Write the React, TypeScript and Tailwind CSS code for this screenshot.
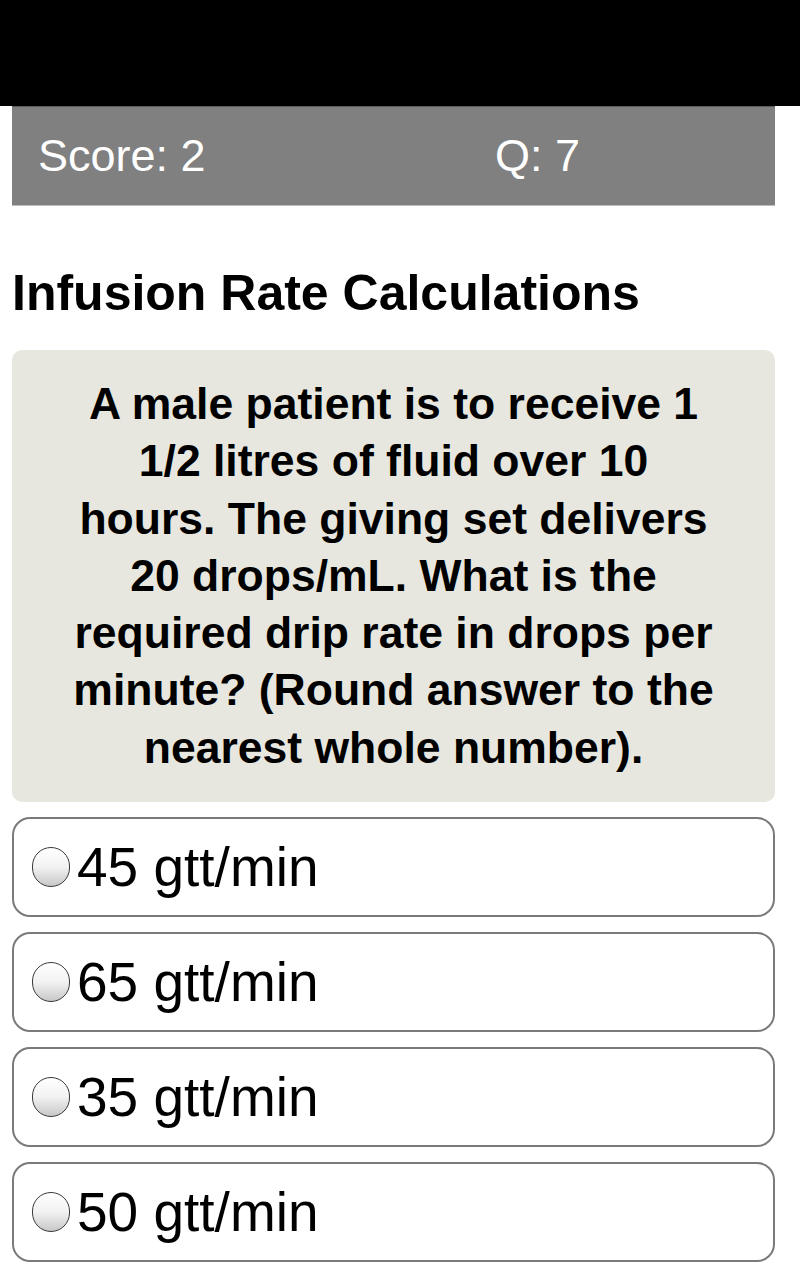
const options = ["45 gtt/min", "65 gtt/min", "35 gtt/min", "50 gtt/min"];

const questionLines = [
  "A male patient is to receive 1",
  "1/2 litres of fluid over 10",
  "hours. The giving set delivers",
  "20 drops/mL. What is the",
  "required drip rate in drops per",
  "minute? (Round answer to the",
  "nearest whole number).",
];

function Radio() {
  return (
    <span className="block h-[40px] w-[38px] shrink-0 rounded-full border-[1.5px] border-[#3a3a3a] bg-gradient-to-b from-white via-[#f2f2f2] to-[#c8c8c8]" />
  );
}

export default function App() {
  return (
    <div className="min-h-[1280px] w-[800px] bg-white font-['Liberation_Sans',Arial,sans-serif] text-black">
      <div className="h-[106px] bg-black" />

      <div className="ml-[12px] w-[763px]">
        <div className="flex h-[100px] items-center border-b border-t border-b-[#bdbdbd] border-t-[#5a5a5a] bg-[#808080] text-[45px] text-white">
          <span className="w-[483px] pl-[26px]">Score: 2</span>
          <span>Q: 7</span>
        </div>

        <h1 className="mt-[57px] text-[50px] font-bold leading-[60px]">Infusion Rate Calculations</h1>

        <div className="mt-[27px] rounded-[10px] bg-[#e7e7df] px-[30px] pb-[26px] pt-[25px] text-center text-[44.5px] font-bold leading-[57.3px]">
          {questionLines.map((line) => (
            <div key={line}>{line}</div>
          ))}
        </div>

        <div className="mt-[15px] flex flex-col gap-[15px]">
          {options.map((opt) => (
            <label
              key={opt}
              className="flex h-[100px] items-center gap-[7px] rounded-[18px] border-2 border-[#7a7a7a] pl-[18px] text-[55px] leading-none"
            >
              <Radio />
              <span>{opt}</span>
            </label>
          ))}
        </div>
      </div>
    </div>
  );
}
